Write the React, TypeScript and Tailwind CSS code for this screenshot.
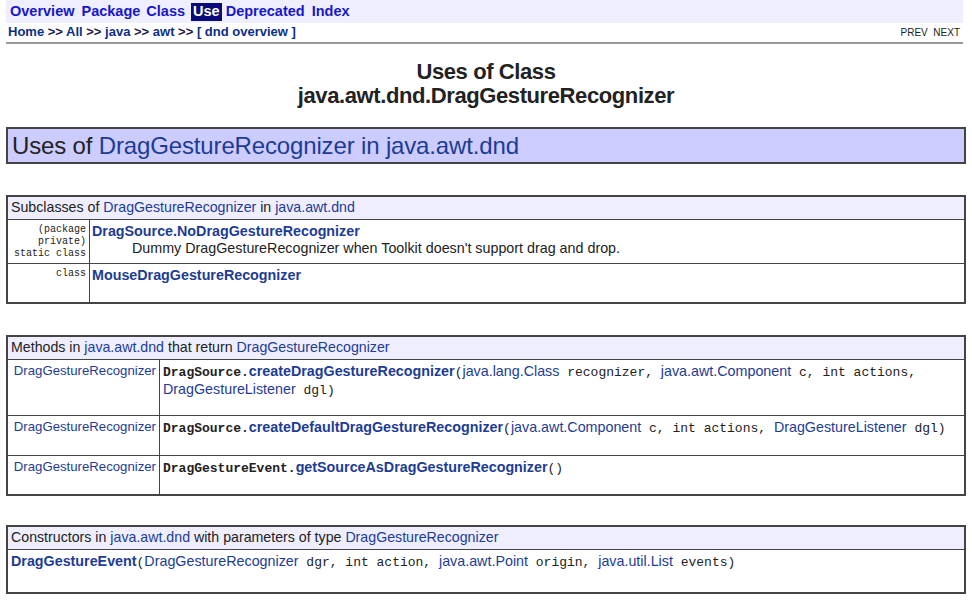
import React from 'react';

const link = 'text-[#1d3c95]';

function Mono({ children, bold }: { children: React.ReactNode; bold?: boolean }) {
  return (
    <span className={`font-['Liberation_Mono',monospace] text-[13px] leading-[16px] ${bold ? 'font-bold' : ''}`}>
      {children}
    </span>
  );
}

function A({ children, bold }: { children: React.ReactNode; bold?: boolean }) {
  return <span className={`${link} ${bold ? 'font-bold' : ''}`}>{children}</span>;
}

function TableHead({ children }: { children: React.ReactNode }) {
  return (
    <div className="bg-[#eeeeff] h-[23px] flex items-center px-[3px] text-[14.2px] border-b border-[#444]">
      {children}
    </div>
  );
}

export default function App() {
  return (
    <div className="min-h-[600px] bg-white font-['Liberation_Sans',Arial,sans-serif] text-[#222]">
      {/* top nav */}
      <div className="pl-[6px] pr-[9px]">
        <div className="bg-[#eeeeff] h-[23px] flex items-center pl-[4px] text-[14.5px] font-bold text-[#1717c9]">
          <span className="mr-[7px]">Overview</span>
          <span className="mr-[6px]">Package</span>
          <span className="mr-[6px]">Class</span>
          <span className="bg-[#0a0a7a] text-white px-[2px] h-[18px] flex items-center mr-[4px]">Use</span>
          <span className="mr-[7px]">Deprecated</span>
          <span>Index</span>
        </div>
        <div className="flex items-center justify-between h-[18px] pl-[2px]">
          <span className="text-[13px] font-bold text-[#0e2f86]">
            Home <span className="text-[#1a1a4a]">&gt;&gt;</span> All <span className="text-[#1a1a4a]">&gt;&gt;</span> java{' '}
            <span className="text-[#1a1a4a]">&gt;&gt;</span> awt <span className="text-[#1a1a4a]">&gt;&gt;</span> [ dnd overview ]
          </span>
          <span className="text-[10px] text-[#222] pr-[3px]">PREV&nbsp;&nbsp;NEXT</span>
        </div>
        <div className="h-[2px] mt-[1px] bg-[#999]" />
      </div>

      {/* title */}
      <div className="text-center font-bold text-[22px] leading-[24px] pt-[16px] tracking-[-0.4px]">
        <div>Uses of Class</div>
        <div>java.awt.dnd.DragGestureRecognizer</div>
      </div>

      <div className="px-[6px] pt-[19px]">
        <div className="bg-[#ccccff] border-2 border-[#444] h-[37px] flex items-center px-[4px] text-[24px] tracking-[-0.15px]">
          Uses of&nbsp;<A>DragGestureRecognizer in java.awt.dnd</A>
        </div>

        {/* subclasses */}
        <div className="mt-[31px] border-2 border-[#444]">
          <TableHead>
            Subclasses of&nbsp;<A>DragGestureRecognizer</A>&nbsp;in&nbsp;<A>java.awt.dnd</A>
          </TableHead>
          <div className="flex h-[44px] border-b border-[#444]">
            <div className="w-[82px] shrink-0 border-r border-[#444] text-right pr-[3px] pt-[4px] font-['Liberation_Mono',monospace] text-[10px] leading-[12px]">
              (package
              <br />
              private)
              <br />
              static class
            </div>
            <div className="pl-[2px] pt-[3px] text-[14.3px] leading-[17px]">
              <A bold>DragSource.NoDragGestureRecognizer</A>
              <div className="pl-[40px]">Dummy DragGestureRecognizer when Toolkit doesn't support drag and drop.</div>
            </div>
          </div>
          <div className="flex h-[38px]">
            <div className="w-[82px] shrink-0 border-r border-[#444] text-right pr-[3px] pt-[4px] font-['Liberation_Mono',monospace] text-[10px] leading-[12px]">
              class
            </div>
            <div className="pl-[2px] pt-[3px] text-[14.3px] leading-[17px]">
              <A bold>MouseDragGestureRecognizer</A>
            </div>
          </div>
        </div>

        {/* methods */}
        <div className="mt-[31px] border-2 border-[#444]">
          <TableHead>
            Methods in&nbsp;<A>java.awt.dnd</A>&nbsp;that return&nbsp;<A>DragGestureRecognizer</A>
          </TableHead>
          {[
            {
              h: 'h-[56px]',
              body: (
                <>
                  <Mono bold>DragSource.</Mono>
                  <A bold>createDragGestureRecognizer</A>
                  <Mono>(</Mono>
                  <A>java.lang.Class</A>
                  <Mono> recognizer, </Mono>
                  <A>java.awt.Component</A>
                  <Mono> c, int actions,</Mono>
                  <br />
                  <A>DragGestureListener</A>
                  <Mono> dgl)</Mono>
                </>
              ),
            },
            {
              h: 'h-[40px]',
              body: (
                <>
                  <Mono bold>DragSource.</Mono>
                  <A bold>createDefaultDragGestureRecognizer</A>
                  <Mono>(</Mono>
                  <A>java.awt.Component</A>
                  <Mono> c, int actions, </Mono>
                  <A>DragGestureListener</A>
                  <Mono> dgl)</Mono>
                </>
              ),
            },
            {
              h: 'h-[38px]',
              body: (
                <>
                  <Mono bold>DragGestureEvent.</Mono>
                  <A bold>getSourceAsDragGestureRecognizer</A>
                  <Mono>()</Mono>
                </>
              ),
            },
          ].map((r, i) => (
            <div key={i} className={`flex ${r.h} ${i < 2 ? 'border-b border-[#444]' : ''}`}>
              <div className="w-[152px] shrink-0 border-r border-[#444] text-right pr-[3px] pt-[3px] text-[13.2px] leading-[16px]">
                <A>DragGestureRecognizer</A>
              </div>
              <div className="pl-[3px] pt-[3px] text-[14.3px] leading-[16px]">{r.body}</div>
            </div>
          ))}
        </div>

        {/* constructors */}
        <div className="mt-[29px] border-2 border-[#444]">
          <TableHead>
            Constructors in&nbsp;<A>java.awt.dnd</A>&nbsp;with parameters of type&nbsp;<A>DragGestureRecognizer</A>
          </TableHead>
          <div className="h-[42px] pl-[3px] pt-[3px] text-[14.3px] leading-[16px]">
            <A bold>DragGestureEvent</A>
            <Mono>(</Mono>
            <A>DragGestureRecognizer</A>
            <Mono> dgr, int action, </Mono>
            <A>java.awt.Point</A>
            <Mono> origin, </Mono>
            <A>java.util.List</A>
            <Mono> events)</Mono>
          </div>
        </div>
      </div>
    </div>
  );
}
